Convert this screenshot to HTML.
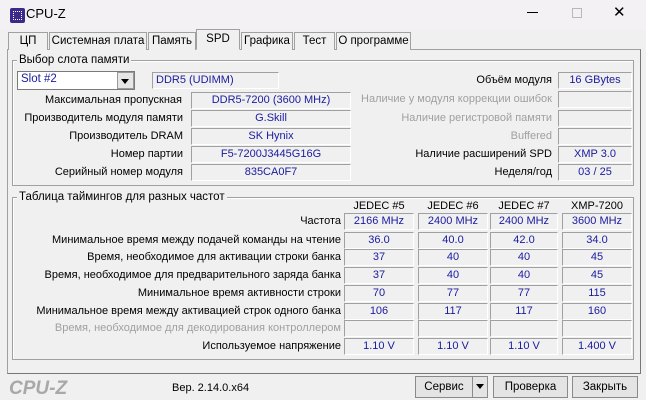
<!DOCTYPE html>
<html><head><meta charset="utf-8"><style>
*{margin:0;padding:0;box-sizing:border-box}
body{width:646px;height:400px;background:#f0f0f0;font-family:"Liberation Sans","DejaVu Sans",sans-serif;font-size:11px;color:#000;position:relative;overflow:hidden}
.a{position:absolute;white-space:nowrap}
.title{left:0;top:0;width:646px;height:30px;background:#f3f1f3}
.box{position:absolute;border:1px solid #a0a0a0;border-right-color:#fff;border-bottom-color:#fff;color:#1a1aa0;text-align:center;line-height:14px;height:17px;white-space:nowrap}
.l{position:absolute;text-align:right;white-space:nowrap;line-height:14px}
.g{color:#a0a0a0}
.tab{position:absolute;top:32px;height:18px;border:1px solid #a0a0a0;border-bottom:none;background:#f0f0f0;text-align:center;line-height:16px;font-size:11.5px}
.grp{position:absolute;border:1px solid #a0a0a0;box-shadow:1px 1px 0 #fff inset}
.gt{position:absolute;background:#f0f0f0;padding:0 2px;font-size:11.5px;line-height:12px}
.btn{position:absolute;top:376px;height:22px;border:1px solid #8a8a8a;background:#e4e4e4;text-align:center;line-height:20px;font-size:11.5px}
</style></head><body>
<div class="a title"></div>
<div class="a" style="left:10px;top:8px;width:15px;height:15px;background:#3b2a8a;border-radius:2px"></div>
<div class="a" style="left:13px;top:11px;width:9px;height:9px;border:1px dotted #fff"></div>
<div class="a" style="left:26px;top:6px;font-size:13px">CPU-Z</div>
<div class="a" style="left:527px;top:12px;width:11px;height:1px;background:#000"></div>
<div class="a" style="left:572px;top:8px;width:10px;height:10px;border:1px solid #b8b8b8"></div>
<div class="a" style="left:613px;top:3px;font-size:15px;font-weight:300">✕</div>

<div class="a" style="left:7px;top:49px;width:634px;height:325px;border:1px solid #a0a0a0;border-right-color:#777;border-bottom-color:#777;background:#f0f0f0"></div>
<div class="tab" style="left:8px;width:40px">ЦП</div>
<div class="tab" style="left:49px;width:98px">Системная плата</div>
<div class="tab" style="left:148px;width:48px">Память</div>
<div class="tab" style="left:196px;top:29px;height:21px;width:44px;background:#f0f0f0;border-bottom:1px solid #f0f0f0;line-height:18px">SPD</div>
<div class="tab" style="left:241px;width:52px">Графика</div>
<div class="tab" style="left:294px;width:41px">Тест</div>
<div class="tab" style="left:336px;width:75px">О программе</div>

<div class="grp" style="left:12px;top:60px;width:622px;height:126px"></div>
<div class="gt" style="left:17px;top:54px">Выбор слота памяти</div>
<div class="a" style="left:17px;top:71px;width:118px;height:19px;border:1px solid #7a7a7a;background:#fff"></div>
<div class="a" style="left:21px;top:73px;color:#1a1aa0;font-size:11.5px">Slot #2</div>
<div class="a" style="left:117px;top:72px;width:17px;height:17px;background:#e6e6e6;border:1px solid #999"></div>
<div class="a" style="left:121px;top:79px;width:0;height:0;border-left:4px solid transparent;border-right:4px solid transparent;border-top:5px solid #000"></div>
<div class="box" style="left:152px;top:72px;width:127px;text-align:left;padding-left:3px">DDR5 (UDIMM)</div>

<div class="l" style="left:0;width:182px;top:93px">Максимальная пропускная</div>
<div class="l" style="left:0;width:183px;top:111px">Производитель модуля памяти</div>
<div class="l" style="left:0;width:183px;top:129px">Производитель DRAM</div>
<div class="l" style="left:0;width:183px;top:147px">Номер партии</div>
<div class="l" style="left:0;width:183px;top:165px">Серийный номер модуля</div>
<div class="box" style="left:191px;top:92px;width:160px">DDR5-7200 (3600 MHz)</div>
<div class="box" style="left:191px;top:110px;width:160px">G.Skill</div>
<div class="box" style="left:191px;top:128px;width:160px">SK Hynix</div>
<div class="box" style="left:191px;top:146px;width:160px">F5-7200J3445G16G</div>
<div class="box" style="left:191px;top:164px;width:160px">835CA0F7</div>

<div class="l" style="left:300px;width:252px;top:73px">Объём модуля</div>
<div class="l g" style="left:300px;width:252px;top:92px">Наличие у модуля коррекции ошибок</div>
<div class="l g" style="left:300px;width:252px;top:111px">Наличие регистровой памяти</div>
<div class="l g" style="left:300px;width:252px;top:129px">Buffered</div>
<div class="l" style="left:300px;width:252px;top:147px">Наличие расширений SPD</div>
<div class="l" style="left:300px;width:252px;top:165px">Неделя/год</div>
<div class="box" style="left:558px;top:72px;width:74px">16 GBytes</div>
<div class="box" style="left:558px;top:91px;width:74px"></div>
<div class="box" style="left:558px;top:110px;width:74px"></div>
<div class="box" style="left:558px;top:128px;width:74px"></div>
<div class="box" style="left:558px;top:146px;width:74px">XMP 3.0</div>
<div class="box" style="left:558px;top:164px;width:74px">03 / 25</div>

<div class="grp" style="left:12px;top:197px;width:622px;height:163px"></div>
<div class="gt" style="left:17px;top:191px">Таблица таймингов для разных частот</div>
<div class="a" style="left:343px;width:72px;top:200px;text-align:center">JEDEC #5</div>
<div class="a" style="left:417px;width:72px;top:200px;text-align:center">JEDEC #6</div>
<div class="a" style="left:489px;width:70px;top:200px;text-align:center">JEDEC #7</div>
<div class="a" style="left:561px;width:72px;top:200px;text-align:center">XMP-7200</div>

<div class="l" style="left:0;width:341px;top:214px">Частота</div>
<div class="l" style="left:0;width:341px;top:233px">Минимальное время между подачей команды на чтение</div>
<div class="l" style="left:0;width:341px;top:250px">Время, необходимое для активации строки банка</div>
<div class="l" style="left:0;width:341px;top:268px">Время, необходимое для предварительного заряда банка</div>
<div class="l" style="left:0;width:341px;top:286px">Минимальное время активности строки</div>
<div class="l" style="left:0;width:341px;top:304px">Минимальное время между активацией строк одного банка</div>
<div class="l g" style="left:0;width:341px;top:321px">Время, необходимое для декодирования контроллером</div>
<div class="l" style="left:0;width:341px;top:339px">Используемое напряжение</div>

<div class="box" style="left:344px;top:213px;width:70px">2166 MHz</div>
<div class="box" style="left:418px;top:213px;width:70px">2400 MHz</div>
<div class="box" style="left:490px;top:213px;width:68px">2400 MHz</div>
<div class="box" style="left:562px;top:213px;width:70px">3600 MHz</div>

<div class="box" style="left:344px;top:232px;width:70px">36.0</div>
<div class="box" style="left:418px;top:232px;width:70px">40.0</div>
<div class="box" style="left:490px;top:232px;width:68px">42.0</div>
<div class="box" style="left:562px;top:232px;width:70px">34.0</div>

<div class="box" style="left:344px;top:249px;width:70px">37</div>
<div class="box" style="left:418px;top:249px;width:70px">40</div>
<div class="box" style="left:490px;top:249px;width:68px">40</div>
<div class="box" style="left:562px;top:249px;width:70px">45</div>

<div class="box" style="left:344px;top:267px;width:70px">37</div>
<div class="box" style="left:418px;top:267px;width:70px">40</div>
<div class="box" style="left:490px;top:267px;width:68px">40</div>
<div class="box" style="left:562px;top:267px;width:70px">45</div>

<div class="box" style="left:344px;top:285px;width:70px">70</div>
<div class="box" style="left:418px;top:285px;width:70px">77</div>
<div class="box" style="left:490px;top:285px;width:68px">77</div>
<div class="box" style="left:562px;top:285px;width:70px">115</div>

<div class="box" style="left:344px;top:303px;width:70px">106</div>
<div class="box" style="left:418px;top:303px;width:70px">117</div>
<div class="box" style="left:490px;top:303px;width:68px">117</div>
<div class="box" style="left:562px;top:303px;width:70px">160</div>

<div class="box" style="left:344px;top:320px;width:70px"></div>
<div class="box" style="left:418px;top:320px;width:70px"></div>
<div class="box" style="left:490px;top:320px;width:68px"></div>
<div class="box" style="left:562px;top:320px;width:70px"></div>

<div class="box" style="left:344px;top:338px;width:70px">1.10 V</div>
<div class="box" style="left:418px;top:338px;width:70px">1.10 V</div>
<div class="box" style="left:490px;top:338px;width:68px">1.10 V</div>
<div class="box" style="left:562px;top:338px;width:70px">1.400 V</div>

<div class="a" style="left:9px;top:378px;font-size:19px;font-weight:bold;font-style:italic;color:#a8a8a8">CPU-Z</div>
<div class="a" style="left:172px;top:382px">Вер. 2.14.0.x64</div>
<div class="btn" style="left:415px;width:58px">Сервис</div>
<div class="btn" style="left:472px;width:16px"></div>
<div class="a" style="left:476px;top:384px;width:0;height:0;border-left:4px solid transparent;border-right:4px solid transparent;border-top:5px solid #000"></div>
<div class="btn" style="left:493px;width:75px">Проверка</div>
<div class="btn" style="left:572px;width:66px">Закрыть</div>
</body></html>
